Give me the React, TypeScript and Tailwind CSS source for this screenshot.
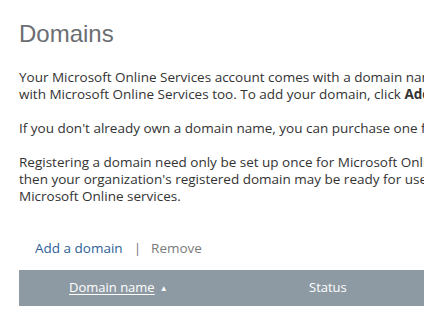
import React from 'react';

const bodyFont = { fontFamily: '"Open Sans", "Noto Sans", sans-serif' };

export default function App() {
  return (
    <div className="w-[424px] h-[314px] overflow-hidden bg-white">
      <div className="w-[700px] pl-[19px] pt-[18px]" style={bodyFont}>
        <h1 className="text-[24px] leading-[32px] text-[#6b6e72]" style={{ fontFamily: '"Liberation Sans", Arial, sans-serif' }}>
          Domains
        </h1>

        <div className="mt-[19px] text-[13.5px] leading-[17px] text-[#333]">
          <p className="whitespace-nowrap">
            Your Microsoft Online Services account comes with a domain name that you can use
            <br />
            with Microsoft Online Services too. To add your domain, click <b>Add a domain</b>.
          </p>
          <p className="mt-[17px] whitespace-nowrap">
            If you don't already own a domain name, you can purchase one from a domain registrar.
          </p>
          <p className="mt-[17px] whitespace-nowrap">
            Registering a domain need only be set up once for Microsoft Online Services, and
            <br />
            then your organization's registered domain may be ready for use with other
            <br />
            Microsoft Online services.
          </p>
        </div>

        <div className="mt-[34px] flex items-center pl-[16px] text-[13.5px] leading-[18px]">
          <a className="text-[#2d5f99]">Add a domain</a>
          <span className="ml-[11px] text-[#777]">|</span>
          <span className="ml-[10px] text-[#7a7a7a]">Remove</span>
        </div>

        <div className="mt-[13px] flex h-[36px] w-[420px] items-center bg-[#8e9aa3] text-[13px] text-white">
          <div className="flex w-[290px] items-center pl-[50px]">
            <span className="underline underline-offset-2">Domain name</span>
            <span className="ml-[5px] text-[8px]">▲</span>
          </div>
          <span>Status</span>
        </div>
      </div>
    </div>
  );
}
